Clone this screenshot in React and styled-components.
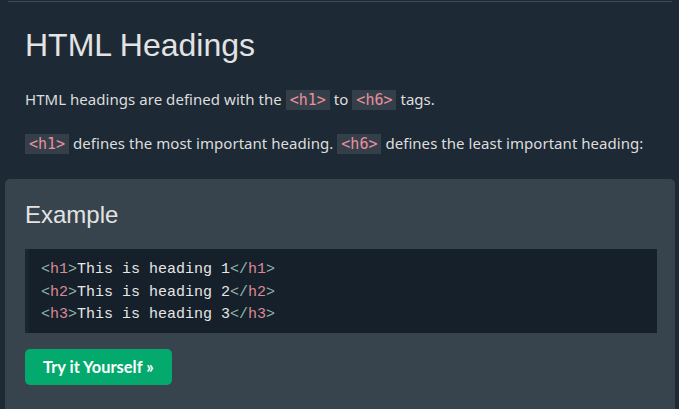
import React from 'react';
import styled, { createGlobalStyle } from 'styled-components';

const GlobalStyle = createGlobalStyle`
  html, body {
    margin: 0;
    background: #1d2a35;
  }
  body {
    font-family: "Noto Sans", "Open Sans", sans-serif;
    font-size: 15px;
    color: #dddddd;
  }
`;

const Main = styled.div`
  padding: 0 4px 0 5px;
`;

const Rule = styled.hr`
  margin: 1px 3px 0 3px;
  border: 0;
  border-top: 1px solid #3e4a54;
`;

const Intro = styled.div`
  padding: 0 20px;
`;

const Title = styled.h1`
  margin: 25px 0 0;
  font-family: "Liberation Sans", Arial, sans-serif;
  font-size: 32px;
  font-weight: 400;
  line-height: 37px;
  color: #e3e3e3;
`;

const Para = styled.p`
  margin: ${(p) => p.$top}px 0 0;
  line-height: 22.5px;
  letter-spacing: 0.045px;
`;

const CodeSpan = styled.code`
  font-family: "DejaVu Sans Mono", monospace;
  font-size: 15px;
  letter-spacing: 0;
  color: #e8909d;
  background: #343f49;
  padding: 1px 4px;
`;

const ExampleBox = styled.div`
  margin-top: 24px;
  background: #38444d;
  border-radius: 5px;
  padding: 22px 18px 30px 20px;
`;

const ExampleTitle = styled.h2`
  margin: 0;
  font-family: "Liberation Sans", Arial, sans-serif;
  font-size: 24px;
  font-weight: 400;
  line-height: 28px;
  color: #e3e3e3;
`;

const CodeBlock = styled.div`
  margin-top: 20px;
  background: #16202a;
  border-left: 4px solid #1b2631;
  padding: 10px 12px 6px;
  font-family: "Liberation Mono", "Courier New", monospace;
  font-size: 15px;
  line-height: 22.5px;
  color: #e6e6e6;
  white-space: pre;
`;

const Bracket = styled.span`
  color: #8fb6ad;
`;

const TagName = styled.span`
  color: #de8896;
`;

const TryButton = styled.a`
  display: inline-block;
  margin-top: 16px;
  background: #04aa6d;
  color: #ffffff;
  border-radius: 5px;
  padding: 0 18px;
  height: 36px;
  line-height: 36px;
  font-family: Lato, "Open Sans", sans-serif;
  font-weight: 700;
  font-size: 16.4px;
  text-decoration: none;
`;

const Tag = ({ name, close }) => (
  <>
    <Bracket>{close ? '</' : '<'}</Bracket>
    <TagName>{name}</TagName>
    <Bracket>&gt;</Bracket>
  </>
);

const lines = [
  { tag: 'h1', text: 'This is heading 1' },
  { tag: 'h2', text: 'This is heading 2' },
  { tag: 'h3', text: 'This is heading 3' },
];

const App = () => (
  <>
    <GlobalStyle />
    <Main>
      <Rule />
      <Intro>
        <Title>HTML Headings</Title>
        <Para $top={24}>
          HTML headings are defined with the <CodeSpan>&lt;h1&gt;</CodeSpan> to{' '}
          <CodeSpan>&lt;h6&gt;</CodeSpan> tags.
        </Para>
        <Para $top={20}>
          <CodeSpan>&lt;h1&gt;</CodeSpan> defines the most important heading.{' '}
          <CodeSpan>&lt;h6&gt;</CodeSpan> defines the least important heading:
        </Para>
      </Intro>
      <ExampleBox>
        <ExampleTitle>Example</ExampleTitle>
        <CodeBlock>
          {lines.map((l, i) => (
            <div key={i}>
              <Tag name={l.tag} />
              {l.text}
              <Tag name={l.tag} close />
            </div>
          ))}
        </CodeBlock>
        <TryButton href="#">Try it Yourself »</TryButton>
      </ExampleBox>
    </Main>
  </>
);

export default App;
